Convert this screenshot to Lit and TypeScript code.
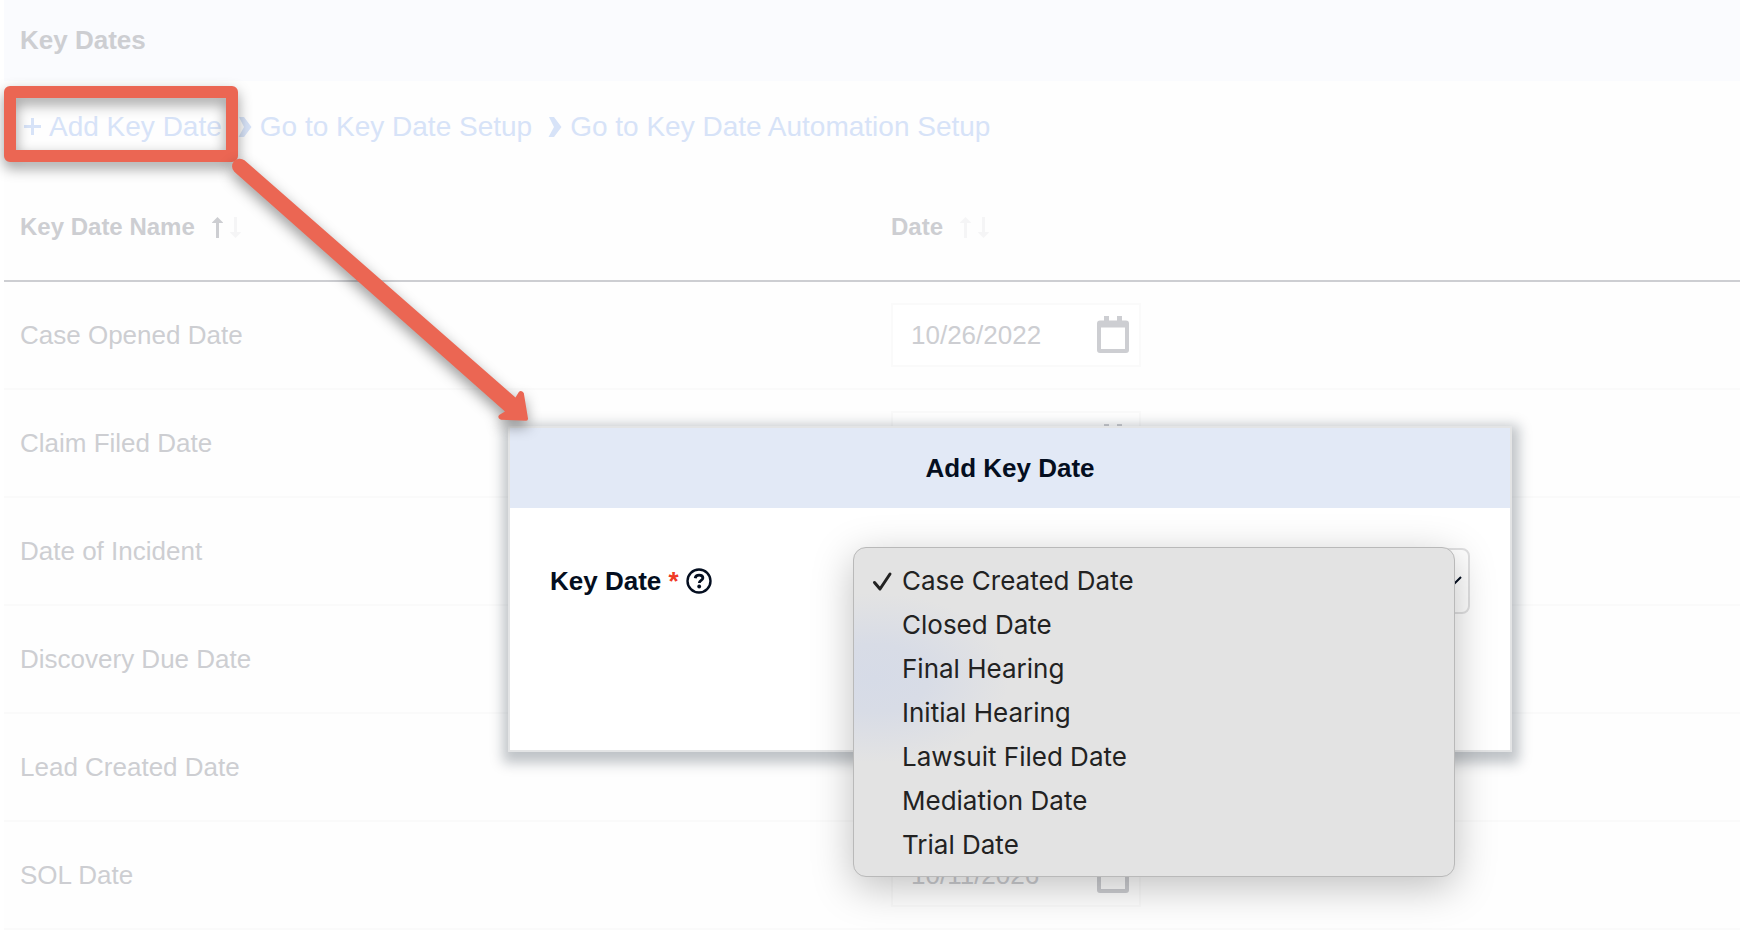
import { LitElement, html, css, svg } from "lit";
import { customElement, property, state } from "lit/decorators.js";
import { classMap } from "lit/directives/class-map.js";

interface KeyDate {
  id: string;
  name: string;
  date: string;
}

@customElement("sort-arrows")
class SortArrows extends LitElement {
  @property() active = "";

  static styles = css`
    :host {
      display: inline-flex;
      gap: 7px;
    }
    .arrow {
      width: 11px;
      height: 21px;
      fill: #f5f5f6;
    }
    .on {
      fill: #cdced2;
    }
  `;

  render() {
    return html`
      <svg class=${classMap({ arrow: true, on: this.active === "up" })} viewBox="0 0 11 21" aria-hidden="true">
        <path d="M5.5 0 L11 5.5 Q11 6 10.500 6 H7 V21 H4 V6 H0.500 Q0 6 0 5.500 Z" />
      </svg>
      <svg class=${classMap({ arrow: true, on: this.active === "down" })} viewBox="0 0 11 21" aria-hidden="true">
        <path d="M5.5 21 L11 15.500 Q11 15 10.500 15 H7 V0 H4 V15 H0.500 Q0 15 0 15.500 Z" />
      </svg>
    `;
  }
}

@customElement("date-field")
class DateField extends LitElement {
  @property() value = "";
  @property() label = "";

  static styles = css`
    .field {
      box-sizing: border-box;
      width: 250px;
      height: 64px;
      display: flex;
      align-items: center;
      padding: 0 10px 0 18px;
      border: 2px solid #fafafa;
      background: #fff;
    }
    .input {
      flex: 1;
      min-width: 0;
      padding: 0;
      border: 0;
      outline: 0;
      background: none;
      font: 26px/32px "Liberation Sans", Arial, sans-serif;
      color: #cdced2;
    }
    .pick {
      display: flex;
      padding: 0;
      border: 0;
      background: none;
      cursor: pointer;
    }
    .icon {
      width: 32px;
      height: 38px;
      fill: #cdced2;
    }
  `;

  render() {
    return html`
      <div class="field">
        <input class="input" type="text" aria-label=${this.label} .value=${this.value} />
        <button class="pick" type="button" aria-label="Open calendar">
          <svg class="icon" viewBox="0 0 32 38" aria-hidden="true">
            <path
              fill-rule="evenodd"
              d="M7 0h5v4.500h8V0h5v4.500h4a3 3 0 0 1 3 3V34a3 3 0 0 1-3 3H3a3 3 0 0 1-3-3V7.500a3 3 0 0 1 3-3h4zM4 11.500V33h24V11.500z"
            />
          </svg>
        </button>
      </div>
    `;
  }
}

@customElement("key-date-dialog")
class KeyDateDialog extends LitElement {
  @state() private selected = "Case Created Date";

  private options = [
    "Case Created Date",
    "Closed Date",
    "Final Hearing",
    "Initial Hearing",
    "Lawsuit Filed Date",
    "Mediation Date",
    "Trial Date",
  ];

  static styles = css`
    :host {
      display: block;
    }
    .dialog {
      border: 2px solid #e3e4e5;
      background: #fff;
      box-shadow: 1px 5px 12px 6px rgba(10, 28, 42, 0.26);
      color: #040e20;
    }
    .title {
      margin: 0;
      background: #e2e9f6;
      text-align: center;
      font-size: 26px;
      line-height: 80px;
      font-weight: 700;
    }
    .body {
      display: grid;
      grid-template-columns: 1fr 2fr;
      align-items: center;
      padding: 40px 40px 136px;
    }
    .label {
      display: flex;
      align-items: center;
      gap: 7px;
      font-size: 26px;
      line-height: 32px;
      font-weight: 700;
    }
    .required {
      color: #f03a25;
    }
    .help {
      display: flex;
      padding: 0;
      border: 0;
      background: none;
      color: inherit;
    }
    .help-icon {
      width: 26px;
      height: 26px;
    }
    .picker {
      position: relative;
    }
    .select {
      display: block;
      box-sizing: border-box;
      width: 100%;
      height: 66px;
      padding: 0 48px 0 18px;
      appearance: none;
      border: 2px solid #e1e1e2;
      border-radius: 8px;
      background: #fff;
      font: 26px "Liberation Sans", Arial, sans-serif;
      color: #040e20;
    }
    .caret {
      position: absolute;
      right: 8px;
      top: 28px;
      width: 22px;
      height: 12px;
      pointer-events: none;
    }
    .menu {
      position: absolute;
      top: -1px;
      right: 15px;
      width: 602px;
      box-sizing: border-box;
      margin: 0;
      padding: 11px 16px 9px;
      list-style: none;
      border: 1px solid #b9b9b9;
      border-radius: 13px;
      background: radial-gradient(ellipse 135px 85px at 20px 130px, #d6dbe7 0%, #d8dce6 40%, #e3e3e3 100%) #e3e3e3;
      box-shadow: 0 10px 40px rgba(0, 0, 0, 0.25);
      font: 26px/44px Inter, "Liberation Sans", sans-serif;
      color: #222;
    }
    .option {
      display: grid;
      grid-template-columns: 24px 1fr;
      gap: 8px;
      align-items: center;
      cursor: default;
    }
    .tick {
      width: 24px;
      height: 24px;
    }
  `;

  render() {
    return html`
      <section class="dialog" role="dialog" aria-labelledby="title">
        <h2 class="title" id="title">Add Key Date</h2>
        <div class="body">
          <div class="label">
            <label for="key-date">Key Date <span class="required">*</span></label>
            <button class="help" type="button" aria-label="Help">
              <svg class="help-icon" viewBox="0 0 26 26" fill="none" stroke="currentColor" aria-hidden="true">
                <circle cx="13" cy="13" r="11.500" stroke-width="2.400" />
                <path d="M9.200 10.200c.3-2 1.700-3 3.900-3 2.300 0 3.800 1.100 3.800 2.900 0 2.300-3.600 2.400-3.600 4.900" stroke-width="2.800" />
                <circle cx="13.200" cy="18.500" r="1.900" fill="currentColor" stroke="none" />
              </svg>
            </button>
          </div>
          <div class="picker">
            <select
              class="select"
              id="key-date"
              .value=${this.selected}
              @change=${(e: Event) => (this.selected = (e.target as HTMLSelectElement).value)}
            >
              ${this.options.map((o) => html`<option>${o}</option>`)}
            </select>
            <svg class="caret" viewBox="0 0 22 12" fill="none" stroke="#040e20" stroke-width="2" aria-hidden="true">
              <path d="M1 1 L11 11 L21 1" />
            </svg>
            <ul class="menu" role="listbox" aria-label="Key Date">
              ${this.options.map(
                (o) => html`
                  <li
                    class="option"
                    role="option"
                    aria-selected=${o === this.selected ? "true" : "false"}
                    @click=${() => (this.selected = o)}
                  >
                    <svg class="tick" viewBox="0 0 24 24" fill="none" stroke="#222" aria-hidden="true">
                      ${o === this.selected
                        ? svg`<path d="M4.500 13.500 L10 20 L20 5" stroke-width="3" stroke-linecap="round" stroke-linejoin="round" />`
                        : ""}
                    </svg>
                    <span>${o}</span>
                  </li>
                `
              )}
            </ul>
          </div>
        </div>
      </section>
    `;
  }
}

@customElement("app-root")
class AppRoot extends LitElement {
  private rows: KeyDate[] = [
    { id: "opened", name: "Case Opened Date", date: "10/26/2022" },
    { id: "claim", name: "Claim Filed Date", date: "" },
    { id: "incident", name: "Date of Incident", date: "" },
    { id: "discovery", name: "Discovery Due Date", date: "" },
    { id: "lead", name: "Lead Created Date", date: "" },
    { id: "sol", name: "SOL Date", date: "10/11/2026" },
  ];

  static styles = css`
    :host {
      display: block;
      position: relative;
      padding-left: 4px;
      background: #fff;
      font-family: "Liberation Sans", Arial, sans-serif;
      color: #cdced2;
    }
    .page {
      background: #fefefe;
    }
    .heading {
      margin: 0;
      padding: 0 16px;
      background: #fafbfe;
      font-size: 26px;
      line-height: 81px;
      font-weight: 700;
    }
    .links {
      display: flex;
      align-items: center;
      gap: 16px;
      height: 91px;
      padding: 0 20px;
    }
    .link {
      display: flex;
      align-items: center;
      gap: 8px;
      padding: 0;
      border: 0;
      background: none;
      font: 28px/36px "Liberation Sans", Arial, sans-serif;
      color: #d7e3f8;
      text-decoration: none;
      white-space: nowrap;
    }
    .plus {
      width: 17px;
      height: 17px;
      stroke: #d7e3f8;
      stroke-width: 3;
    }
    .chevron {
      width: 14px;
      height: 20px;
      fill: #d7e3f8;
    }
    .table {
      width: 100%;
      table-layout: fixed;
      border-collapse: separate;
      border-spacing: 0;
    }
    .th,
    .td {
      box-sizing: border-box;
      height: 108px;
      padding: 0 16px;
      text-align: left;
      font-size: 26px;
      border-bottom: 2px solid #fafafa;
    }
    .th {
      height: 110px;
      padding-top: 2px;
      font-size: 24px;
      border-bottom-color: #cdced2;
    }
    .td {
      font-weight: 400;
    }
    .date {
      padding-left: 19px;
    }
    .sorter {
      display: flex;
      align-items: center;
      gap: 17px;
      padding: 0;
      border: 0;
      background: none;
      font: inherit;
      color: inherit;
    }
    .dialog {
      position: absolute;
      left: 508px;
      top: 426px;
      right: 228px;
    }
    .highlight {
      position: absolute;
      left: 4px;
      top: 86px;
      box-sizing: border-box;
      width: 234px;
      height: 76px;
      border: 12px solid #eb6653;
      border-radius: 6px;
      filter: drop-shadow(0 6px 7px rgba(0, 0, 0, 0.4));
      pointer-events: none;
    }
    .pointer {
      position: absolute;
      left: 220px;
      top: 150px;
      width: 320px;
      height: 290px;
      overflow: visible;
      fill: #eb6653;
      filter: drop-shadow(0 6px 7px rgba(0, 0, 0, 0.4));
      pointer-events: none;
    }
  `;

  private setupLink(text: string) {
    return html`
      <a class="link" href="#">
        <svg class="chevron" viewBox="0 0 14 20" aria-hidden="true">
          <path d="M1 0 H6 L13.500 10 L6 20 H0.500 L6 10 Z" />
        </svg>
        ${text}
      </a>
    `;
  }

  render() {
    return html`
      <main class="page">
        <h1 class="heading">Key Dates</h1>
        <nav class="links" aria-label="Key date actions">
          <button class="link" type="button">
            <svg class="plus" viewBox="0 0 17 17" aria-hidden="true"><path d="M8.500 0V17M0 8.500H17" /></svg>
            Add Key Date
          </button>
          ${this.setupLink("Go to Key Date Setup")} ${this.setupLink("Go to Key Date Automation Setup")}
        </nav>
        <table class="table">
          <thead>
            <tr>
              <th class="th" scope="col">
                <button class="sorter" type="button">Key Date Name <sort-arrows active="up"></sort-arrows></button>
              </th>
              <th class="th date" scope="col">
                <button class="sorter" type="button">Date <sort-arrows></sort-arrows></button>
              </th>
            </tr>
          </thead>
          <tbody>
            ${this.rows.map(
              (r) => html`
                <tr>
                  <th class="td" scope="row">${r.name}</th>
                  <td class="td date"><date-field label=${r.name} value=${r.date}></date-field></td>
                </tr>
              `
            )}
          </tbody>
        </table>
      </main>
      <key-date-dialog class="dialog"></key-date-dialog>
      <div class="highlight"></div>
      <svg class="pointer" viewBox="220 150 320 290" aria-hidden="true">
        <path
          d="M244.500 160.300 L515.500 397.500 L518.500 392.500 Q521 389.500 523.800 393 L528 418.500 Q528.200 420.800 526 420.700 L501 419.800 Q496.500 417.500 499.500 414.800 L505 411.500 L234.300 171.800 A7.700 7.700 0 0 1 244.500 160.300 Z"
        />
      </svg>
    `;
  }
}
